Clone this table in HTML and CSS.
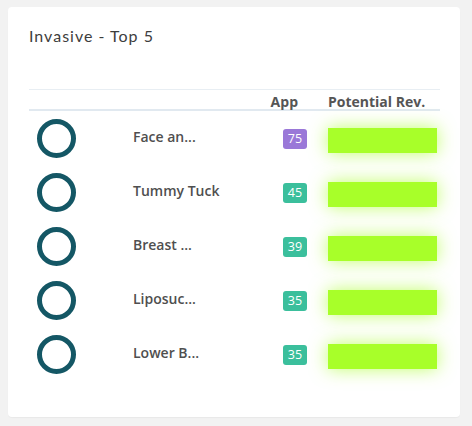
FILE: index.html
```html
<!DOCTYPE html>
<html>
<head>
<meta charset="utf-8">
<link rel="stylesheet" href="styles.css">
</head>
<body>
<div class="card">
  <h2 class="title">Invasive - Top 5</h2>
  <div class="table">
    <div class="thead">
      <div class="c-icon"></div>
      <div class="c-name"></div>
      <div class="c-app">App</div>
      <div class="c-rev">Potential Rev.</div>
    </div>
    <div class="row">
      <div class="c-icon"><span class="ring"></span></div>
      <div class="c-name">Face an...</div>
      <div class="c-app"><span class="badge purple">75</span></div>
      <div class="c-rev"><span class="bar"></span></div>
    </div>
    <div class="row">
      <div class="c-icon"><span class="ring"></span></div>
      <div class="c-name">Tummy Tuck</div>
      <div class="c-app"><span class="badge green">45</span></div>
      <div class="c-rev"><span class="bar"></span></div>
    </div>
    <div class="row">
      <div class="c-icon"><span class="ring"></span></div>
      <div class="c-name">Breast ...</div>
      <div class="c-app"><span class="badge green">39</span></div>
      <div class="c-rev"><span class="bar"></span></div>
    </div>
    <div class="row">
      <div class="c-icon"><span class="ring"></span></div>
      <div class="c-name">Liposuc...</div>
      <div class="c-app"><span class="badge green">35</span></div>
      <div class="c-rev"><span class="bar"></span></div>
    </div>
    <div class="row">
      <div class="c-icon"><span class="ring"></span></div>
      <div class="c-name">Lower B...</div>
      <div class="c-app"><span class="badge green">35</span></div>
      <div class="c-rev"><span class="bar"></span></div>
    </div>
  </div>
</div>
</body>
</html>
```
FILE: styles.css
```css
html, body {
  margin: 0;
  padding: 0;
  background: #f2f2f2;
}
body {
  padding: 7px 12px 9px 8px;
  font-family: "Open Sans", "Liberation Sans", sans-serif;
}
.card {
  background: #fff;
  border-radius: 4px;
  height: 410px;
  box-sizing: border-box;
  padding: 19px 20px 0 21px;
  box-shadow: 0 1px 1px rgba(0,0,0,0.04);
}
.title {
  margin: 0;
  font-family: "Lato", "Liberation Sans", sans-serif;
  font-weight: 400;
  font-size: 16px;
  line-height: 20px;
  letter-spacing: 1px;
  color: #3d3d3d;
  height: 20px;
}
.table {
  margin-top: 43px;
}
.thead {
  display: flex;
  align-items: center;
  border-top: 1px solid #e8eef3;
  border-bottom: 2px solid #e1e9f0;
  height: 19px;
  font-weight: 700;
  font-size: 14px;
  color: #555;
}
.row {
  display: flex;
  align-items: center;
  height: 54px;
}
.c-icon {
  width: 104px;
  padding-left: 8px;
  box-sizing: border-box;
  display: flex;
}
.c-name {
  width: 150px;
  font-weight: 600;
  font-size: 14px;
  color: #4f4f4f;
  position: relative;
  top: -2px;
}
.c-app {
  width: 24px;
  display: flex;
  justify-content: flex-end;
}
.thead .c-app {
  width: 15px;
  margin-right: 9px;
  position: relative;
  top: 2px;
}
.thead .c-rev {
  position: relative;
  top: 2px;
}
.c-rev {
  margin-left: 21px;
  display: flex;
}
.ring {
  width: 39px;
  height: 39px;
  box-sizing: border-box;
  border: 5px solid #145765;
  border-radius: 50%;
}
.badge {
  display: inline-block;
  width: 24px;
  height: 20px;
  line-height: 20px;
  border-radius: 3px;
  color: #fff;
  font-size: 12.5px;
  text-align: center;
  position: relative;
  top: 1px;
}
.purple { background: #9a78d8; }
.green { background: #3bbf9c; }
.bar {
  width: 109px;
  height: 25px;
  background: #a8ff29;
  box-shadow: 0 0 18px rgba(166, 255, 41, 0.7);
  position: relative;
  top: 2px;
}
```
